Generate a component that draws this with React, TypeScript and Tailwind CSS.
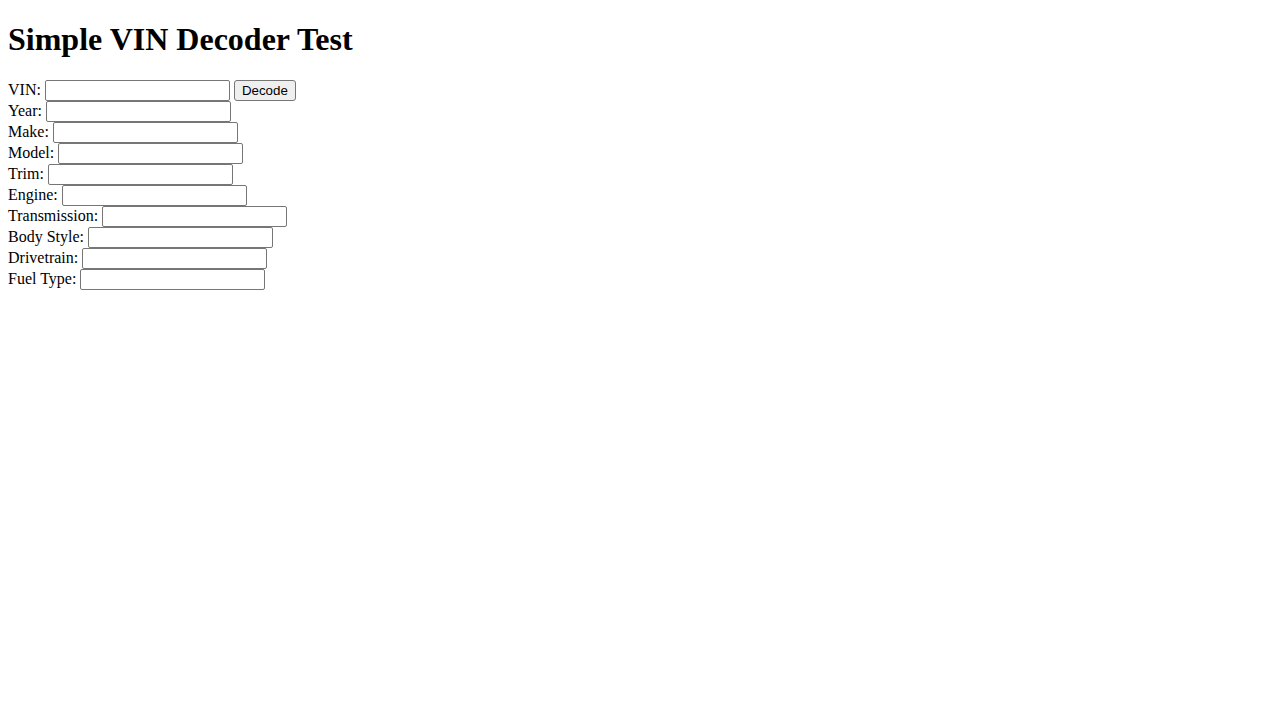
import { useState } from 'react';

const fields = [
  'Year',
  'Make',
  'Model',
  'Trim',
  'Engine',
  'Transmission',
  'Body Style',
  'Drivetrain',
  'Fuel Type',
];

const inputClass =
  "inline-block w-[185px] h-[21px] align-baseline border border-[#767676] rounded-[2px] px-[2px] py-[1px] bg-white text-[13.333px] font-['Liberation_Sans',Arial,sans-serif] leading-[normal]";

export default function App() {
  const [vin, setVin] = useState('');

  return (
    <div className="px-2 min-h-screen bg-white text-black font-['Liberation_Serif','Times_New_Roman',serif] text-base leading-[normal]">
      <h1 className="text-[32px] font-bold my-[21.44px] leading-[normal]">Simple VIN Decoder Test</h1>

      <div>
        VIN:{' '}
        <input className={inputClass} value={vin} onChange={(e) => setVin(e.target.value)} />{' '}
        <button className="inline-block h-[21px] align-baseline bg-[#efefef] border border-[#767676] rounded-[3px] px-[7px] py-[1px] text-[13.333px] font-['Liberation_Sans',Arial,sans-serif] leading-[normal]">
          Decode
        </button>
      </div>

      {fields.map((f) => (
        <div key={f}>
          {f}: <input className={inputClass} readOnly />
        </div>
      ))}
    </div>
  );
}
